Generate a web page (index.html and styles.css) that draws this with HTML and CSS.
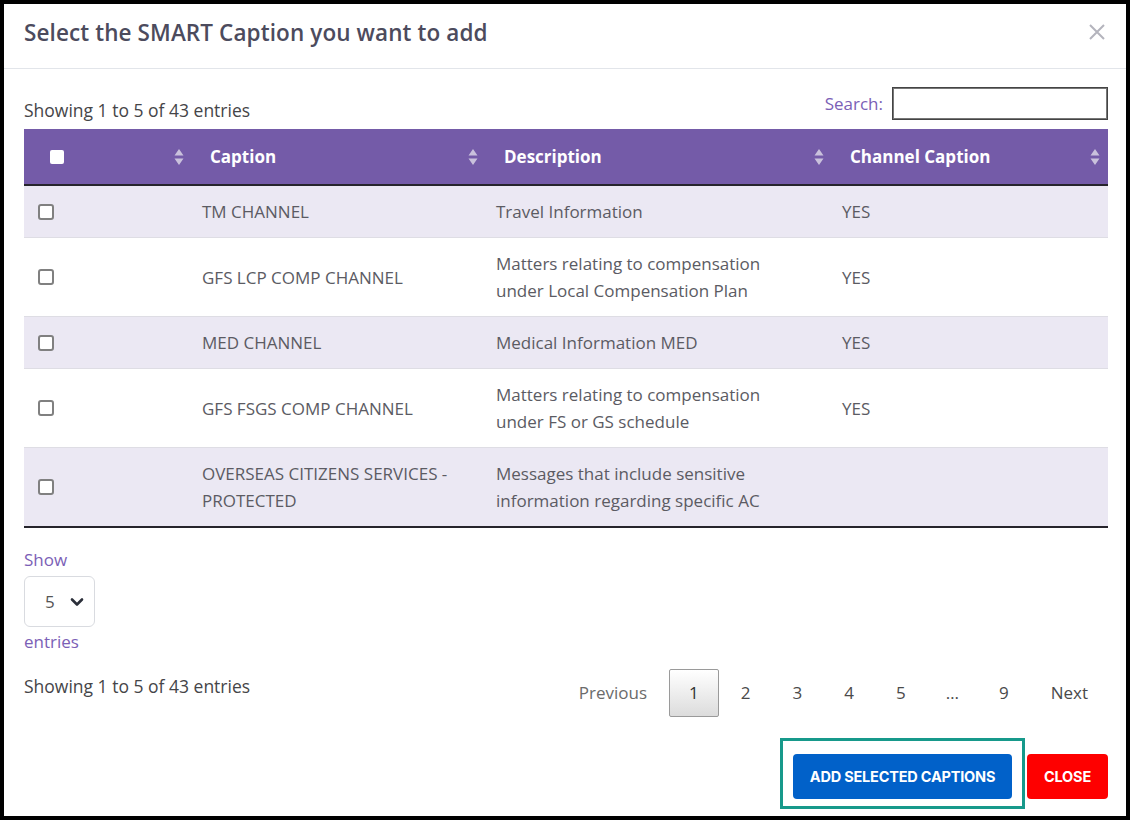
FILE: index.html
```html
<!DOCTYPE html>
<html lang="en">
<head>
  <meta charset="UTF-8">
  <title>Select SMART Caption</title>
  <link rel="stylesheet" href="styles.css">
</head>
<body>

  <div class="modal">
    <div class="modal-header">
      <h1>Select the SMART Caption you want to add</h1>
      <button class="btn-x" type="button" aria-label="Close">
        <svg width="18" height="18" viewBox="0 0 18 18"><path d="M2 2 L16 16 M16 2 L2 16" stroke="#b4b4bd" stroke-width="2" fill="none"/></svg>
      </button>
    </div>

    <div class="modal-body">
      <div class="top-bar">
        <div class="info">Showing 1 to 5 of 43 entries</div>
        <label class="search">Search: <input type="text"></label>
      </div>

      <table class="captions">
        <colgroup>
          <col style="width:168px">
          <col style="width:294px">
          <col style="width:346px">
          <col>
        </colgroup>
        <thead>
          <tr>
            <th><div class="th-in"><span class="check-all"></span><svg class="sort" width="10" height="18" viewBox="0 0 10 18"><path d="M5 1 L9.5 7.5 H0.5 Z M5 17 L9.5 10.5 H0.5 Z" fill="#c9c1dc"/></svg></div></th>
            <th><div class="th-in">Caption<svg class="sort" width="10" height="18" viewBox="0 0 10 18"><path d="M5 1 L9.5 7.5 H0.5 Z M5 17 L9.5 10.5 H0.5 Z" fill="#c9c1dc"/></svg></div></th>
            <th><div class="th-in">Description<svg class="sort" width="10" height="18" viewBox="0 0 10 18"><path d="M5 1 L9.5 7.5 H0.5 Z M5 17 L9.5 10.5 H0.5 Z" fill="#c9c1dc"/></svg></div></th>
            <th><div class="th-in">Channel Caption<svg class="sort" width="10" height="18" viewBox="0 0 10 18"><path d="M5 1 L9.5 7.5 H0.5 Z M5 17 L9.5 10.5 H0.5 Z" fill="#c9c1dc"/></svg></div></th>
          </tr>
        </thead>
        <tbody>
          <tr>
            <td><span class="check"></span></td>
            <td>TM CHANNEL</td>
            <td class="desc">Travel Information</td>
            <td>YES</td>
          </tr>
          <tr>
            <td><span class="check"></span></td>
            <td>GFS LCP COMP CHANNEL</td>
            <td class="desc">Matters relating to compensation under Local Compensation Plan</td>
            <td>YES</td>
          </tr>
          <tr>
            <td><span class="check"></span></td>
            <td>MED CHANNEL</td>
            <td class="desc">Medical Information MED</td>
            <td>YES</td>
          </tr>
          <tr>
            <td><span class="check"></span></td>
            <td>GFS FSGS COMP CHANNEL</td>
            <td class="desc">Matters relating to compensation under FS or GS schedule</td>
            <td>YES</td>
          </tr>
          <tr>
            <td><span class="check"></span></td>
            <td>OVERSEAS CITIZENS SERVICES - PROTECTED</td>
            <td class="desc">Messages that include sensitive information regarding specific AC</td>
            <td></td>
          </tr>
        </tbody>
      </table>

      <div class="length">
        <div class="purple">Show</div>
        <div class="select-box">
          <span>5</span>
          <svg width="14" height="10" viewBox="0 0 14 10"><path d="M2 2.5 L7 7.5 L12 2.5" stroke="#2b2f3a" stroke-width="2.6" fill="none" stroke-linecap="round" stroke-linejoin="round"/></svg>
        </div>
        <div class="purple">entries</div>
      </div>

      <div class="bottom-bar">
        <div class="info low">Showing 1 to 5 of 43 entries</div>
        <div class="paging">
          <span class="pg prev">Previous</span>
          <span class="pg current">1</span>
          <span class="pg">2</span>
          <span class="pg">3</span>
          <span class="pg">4</span>
          <span class="pg">5</span>
          <span class="pg dots">…</span>
          <span class="pg">9</span>
          <span class="pg">Next</span>
        </div>
      </div>
    </div>

    <div class="modal-footer">
      <span class="highlight"><button class="btn btn-add" type="button">ADD SELECTED CAPTIONS</button></span>
      <button class="btn btn-close" type="button">CLOSE</button>
    </div>
  </div>

</body>
</html>
```

FILE: styles.css
```css
:root {
  --purple: #745ba8;
  --purple-text: #7b60b6;
  --row-alt: #ebe8f3;
  --text: #5b5b63;
  --title: #4c4b5d;
}

* {
  box-sizing: border-box;
}

body {
  margin: 0;
  font-family: 'Open Sans', sans-serif;
  background: #fff;
}

.modal {
  width: 1130px;
  height: 820px;
  border: 4px solid #000;
  background: #fff;
}

.modal-header {
  height: 65px;
  display: flex;
  align-items: center;
  justify-content: space-between;
  padding: 0 20px 8px 20px;
  border-bottom: 1px solid #e2e5ea;
}

.modal-header h1 {
  margin: 0;
  font-size: 22.5px;
  font-weight: 600;
  letter-spacing: 0.1px;
  color: var(--title);
}

.btn-x {
  border: none;
  background: none;
  padding: 0;
  display: flex;
}

.modal-body {
  padding: 0 18px 0 20px;
}

.top-bar {
  margin-top: 18px;
  height: 42px;
  display: flex;
  justify-content: space-between;
  align-items: flex-start;
}

.info {
  font-size: 17.5px;
  line-height: 24px;
  color: #454548;
  margin-top: 11px;
}

.info.low {
  margin-top: 5px;
}

.search {
  display: flex;
  align-items: center;
  gap: 9px;
  font-size: 17px;
  color: var(--purple-text);
}

.search input {
  width: 216px;
  height: 33px;
  border: 1px solid #444;
  box-shadow: inset 0 0 0 1px #777;
  outline: none;
}

.captions {
  width: 100%;
  border-collapse: collapse;
  table-layout: fixed;
  font-size: 17px;
}

.captions th {
  height: 56px;
  background: var(--purple);
  color: #fff;
  font-weight: 700;
  text-align: left;
  padding: 0 8px 0 18px;
  border-bottom: 2px solid #26242c;
}

.th-in {
  display: flex;
  align-items: center;
  justify-content: space-between;
}

.sort {
  display: block;
}

.check-all {
  width: 14px;
  height: 14px;
  background: #fff;
  border-radius: 2px;
  margin-left: 8px;
}

.captions td {
  padding: 12px 10px;
  line-height: 27px;
  color: var(--text);
  border-top: 1px solid #dedde4;
  vertical-align: middle;
}

.captions td.desc {
  padding-right: 36px;
}

.captions tbody tr:first-child td {
  border-top: none;
}

.captions tbody tr:nth-child(odd) td {
  background: var(--row-alt);
}

.captions tbody tr:last-child td {
  border-bottom: 2px solid #26242c;
}

.captions td:first-child {
  padding-left: 14px;
}

.check {
  display: block;
  width: 16px;
  height: 16px;
  border: 2px solid #808080;
  border-radius: 3px;
  background: #fff;
}

.length {
  margin-top: 20px;
}

.purple {
  color: var(--purple-text);
  font-size: 17px;
  line-height: 24px;
}

.select-box {
  margin: 4px 0 3px;
  width: 71px;
  height: 51px;
  border: 1px solid #d9dbe0;
  border-radius: 6px;
  display: flex;
  align-items: center;
  justify-content: space-between;
  padding: 0 10px 0 20px;
  font-size: 17px;
  color: #555;
}

.bottom-bar {
  margin-top: 15px;
  display: flex;
  justify-content: space-between;
  align-items: flex-start;
}

.paging {
  display: flex;
}

.pg {
  padding: 11px 19px;
  margin-left: 2px;
  line-height: 24px;
  font-size: 17px;
  color: #4a4a4a;
  border: 1px solid transparent;
  border-radius: 2px;
}

.pg.prev {
  color: #6b6b6b;
}

.pg.dots {
  padding: 11px 17px;
}

.pg.current {
  background: linear-gradient(#fff, #dcdcdc);
  border-color: #9a9a9a;
  color: #333;
}

.modal-footer {
  margin-top: 21px;
  display: flex;
  justify-content: flex-end;
  align-items: flex-start;
  padding-right: 18px;
}

.highlight {
  display: flex;
  border: 3px solid #17998b;
  padding: 13px 10px 7px;
  margin-right: 2px;
}

.btn {
  height: 45px;
  border: none;
  border-radius: 4px;
  color: #fff;
  font-family: 'Inter', sans-serif;
  font-weight: 700;
  font-size: 14.5px;
  letter-spacing: -0.2px;
  cursor: pointer;
}

.btn-add {
  width: 219px;
  background: #0161c9;
}

.btn-close {
  width: 81px;
  margin-top: 16px;
  background: #fe0000;
}
```
